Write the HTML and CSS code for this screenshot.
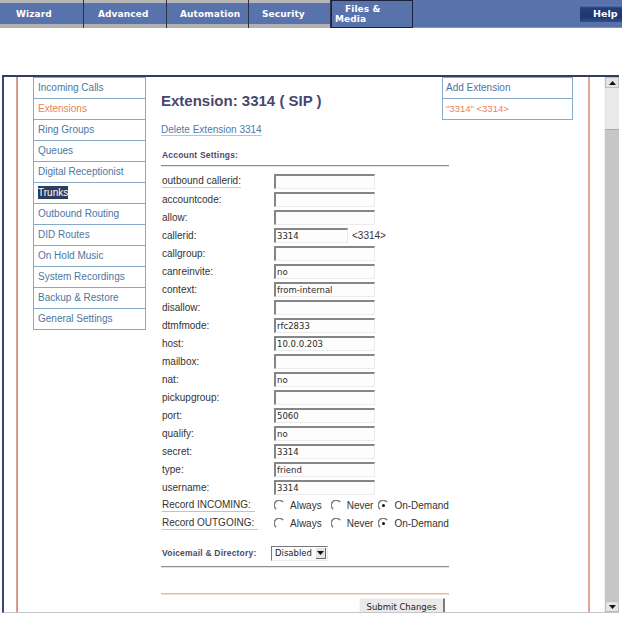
FILE: index.html
```html
<!DOCTYPE html>
<html>
<head>
<meta charset="utf-8">
<title>Extension 3314</title>
<link rel="stylesheet" href="styles.css">
</head>
<body>
<div class="topnav">
  <div class="tab w1">Wizard</div>
  <div class="tab w2">Advanced</div>
  <div class="tab w3">Automation</div>
  <div class="tab w3">Security</div>
  <div class="tab active"><span class="l1">Files &amp;</span><span class="l2">Media</span></div>
  <div class="navfill"><div class="help">Help</div></div>
</div>

<div class="frame">
  <div class="view">
    <ul class="menu">
      <li>Incoming Calls</li>
      <li class="cur">Extensions</li>
      <li>Ring Groups</li>
      <li>Queues</li>
      <li>Digital Receptionist</li>
      <li><span class="sel">Trunks</span></li>
      <li>Outbound Routing</li>
      <li>DID Routes</li>
      <li>On Hold Music</li>
      <li>System Recordings</li>
      <li>Backup &amp; Restore</li>
      <li>General Settings</li>
    </ul>

    <div class="main">
      <h1 class="title">Extension: 3314 ( SIP )</h1>
      <div class="del"><span class="dlink">Delete Extension 3314</span></div>
      <div class="section">Account Settings:</div>

      <div class="rows">
        <div class="row"><span class="lbl"><span class="ul">outbound callerid:</span></span><span class="inp"></span></div>
        <div class="row"><span class="lbl">accountcode:</span><span class="inp"></span></div>
        <div class="row"><span class="lbl">allow:</span><span class="inp"></span></div>
        <div class="row"><span class="lbl">callerid:</span><span class="inp short">3314</span><span class="after">&lt;3314&gt;</span></div>
        <div class="row"><span class="lbl">callgroup:</span><span class="inp"></span></div>
        <div class="row"><span class="lbl">canreinvite:</span><span class="inp">no</span></div>
        <div class="row"><span class="lbl">context:</span><span class="inp">from-internal</span></div>
        <div class="row"><span class="lbl">disallow:</span><span class="inp"></span></div>
        <div class="row"><span class="lbl">dtmfmode:</span><span class="inp">rfc2833</span></div>
        <div class="row"><span class="lbl">host:</span><span class="inp">10.0.0.203</span></div>
        <div class="row"><span class="lbl">mailbox:</span><span class="inp"></span></div>
        <div class="row"><span class="lbl">nat:</span><span class="inp">no</span></div>
        <div class="row"><span class="lbl">pickupgroup:</span><span class="inp"></span></div>
        <div class="row"><span class="lbl">port:</span><span class="inp">5060</span></div>
        <div class="row"><span class="lbl">qualify:</span><span class="inp">no</span></div>
        <div class="row"><span class="lbl">secret:</span><span class="inp">3314</span></div>
        <div class="row"><span class="lbl">type:</span><span class="inp">friend</span></div>
        <div class="row"><span class="lbl">username:</span><span class="inp">3314</span></div>
        <div class="row">
          <span class="lbl"><span class="ul rec">Record INCOMING:</span></span>
          <span class="opt"><svg class="radio" viewBox="0 0 11 11"><path d="M9.2 2.2 A5 5 0 1 0 2.2 9.2" fill="none" stroke="#7d7d7d" stroke-width="1.4"/></svg>Always</span>
          <span class="opt o2"><svg class="radio" viewBox="0 0 11 11"><path d="M9.2 2.2 A5 5 0 1 0 2.2 9.2" fill="none" stroke="#7d7d7d" stroke-width="1.4"/></svg>Never</span>
          <span class="opt o3"><svg class="radio" viewBox="0 0 11 11"><path d="M9.2 2.2 A5 5 0 1 0 2.2 9.2" fill="none" stroke="#7d7d7d" stroke-width="1.4"/><circle cx="5.5" cy="5.5" r="1.5" fill="#111"/></svg>On-Demand</span>
        </div>
        <div class="row">
          <span class="lbl"><span class="ul rec">Record OUTGOING:</span></span>
          <span class="opt"><svg class="radio" viewBox="0 0 11 11"><path d="M9.2 2.2 A5 5 0 1 0 2.2 9.2" fill="none" stroke="#7d7d7d" stroke-width="1.4"/></svg>Always</span>
          <span class="opt o2"><svg class="radio" viewBox="0 0 11 11"><path d="M9.2 2.2 A5 5 0 1 0 2.2 9.2" fill="none" stroke="#7d7d7d" stroke-width="1.4"/></svg>Never</span>
          <span class="opt o3"><svg class="radio" viewBox="0 0 11 11"><path d="M9.2 2.2 A5 5 0 1 0 2.2 9.2" fill="none" stroke="#7d7d7d" stroke-width="1.4"/><circle cx="5.5" cy="5.5" r="1.5" fill="#111"/></svg>On-Demand</span>
        </div>
      </div>

      <div class="vm">
        <span class="vmlbl">Voicemail &amp; Directory:</span>
        <span class="select"><span class="sval">Disabled</span><span class="sbtn"><svg viewBox="0 0 7 4" width="7" height="4"><path d="M0 0 H7 L3.5 4 Z" fill="#111"/></svg></span></span>
      </div>

      <div class="orange"></div>
      <div class="actions"><span class="btn">Submit Changes</span></div>
    </div>

    <ul class="menu side">
      <li>Add Extension</li>
      <li class="cur">"3314" &lt;3314&gt;</li>
    </ul>
  </div>
  <div class="scrollbar">
    <div class="arrow up"><svg viewBox="0 0 7 4" width="7" height="4"><path d="M0 4 H7 L3.5 0 Z" fill="#111"/></svg></div>
    <div class="thumb"></div>
    <div class="track"></div>
    <div class="arrow down"><svg viewBox="0 0 7 4" width="7" height="4"><path d="M0 0 H7 L3.5 4 Z" fill="#111"/></svg></div>
  </div>
</div>
</body>
</html>
```

FILE: styles.css
```css
html, body {
  margin: 0;
  padding: 0;
  background: #ffffff;
}
body {
  font-family: "Liberation Sans", Arial, sans-serif;
  font-size: 10px;
  color: #333;
  width: 622px;
  height: 622px;
  overflow: hidden;
}

/* ---------- top navigation ---------- */
.topnav {
  display: flex;
  height: 28px;
  background: #5873ab;
}
.tab {
  box-sizing: border-box;
  width: 83px;
  height: 28px;
  padding-left: 14px;
  display: flex;
  align-items: center;
  background: linear-gradient(to bottom, #b7b7b7 0 3px, #5873ab 3px 24px, #b1b1b1 24px 28px);
  border-right: 1px solid #2b3046;
  color: #fff;
  font-family: "DejaVu Sans", sans-serif;
  font-weight: bold;
  font-size: 9px;
  letter-spacing: 0.1px;
}
.tab.w1 { width: 84px; padding-left: 16px; }
.tab.w3 { width: 82px; padding-left: 13px; }
.tab.active {
  width: 82px;
  background: #5873ab;
  border: 1px solid #1b2238;
  padding-left: 3px;
  flex-direction: column;
  align-items: flex-start;
  justify-content: center;
  line-height: 10px;
}
.tab.active .l1 { padding-left: 10px; }
.navfill {
  flex: 1;
  display: flex;
  justify-content: flex-end;
  align-items: flex-start;
  border-bottom: 1px solid #8193bd;
}
.help {
  margin-top: 5px;
  width: 42px;
  height: 17px;
  box-sizing: border-box;
  padding-left: 13px;
  line-height: 17px;
  color: #fff;
  font-family: "DejaVu Sans", sans-serif;
  font-weight: bold;
  font-size: 9.5px;
  background: linear-gradient(to bottom, #6d83b4 0, #243f7a 3px, #1d3670 12px, #30508c 17px);
}

/* ---------- frame ---------- */
.frame {
  margin: 47px 0 0 2px;
  width: 615px;
  height: 535px;
  border-top: 2px solid #323d66;
  border-left: 2px solid #3a4570;
  border-bottom: 1px solid #c3c6cf;
  display: flex;
}
.view {
  flex: 1;
  min-width: 0;
  overflow: hidden;
  display: flex;
  align-items: flex-start;
  padding-left: 29px;
  background-color: #fff;
  background-image:
    linear-gradient(to right, transparent 12px, #e7b2a2 12px, #d68e79 13px, #d68e79 14px, transparent 14px),
    linear-gradient(to left, transparent 14px, #e0a696 14px, #e0a696 16px, transparent 16px);
  background-repeat: no-repeat;
}

/* ---------- menus ---------- */
.menu {
  list-style: none;
  margin: 0;
  padding: 0;
  width: 113px;
  box-sizing: border-box;
  border: 1px solid #87aacb;
  border-bottom: none;
  flex-shrink: 0;
  background: #fff;
}
.menu li {
  height: 20px;
  line-height: 20px;
  border-bottom: 1px solid #87aacb;
  padding-left: 4px;
  color: #4b77a3;
  font-size: 10px;
  white-space: nowrap;
}
.menu li.cur { color: #e8835b; }
.menu .sel {
  background: #2f3d5d;
  color: #fff;
  padding: 1px 0;
}
.menu.side {
  width: 131px;
  margin-left: -7px;
}
.menu.side li { padding-left: 3px; }
.menu.side li.cur { font-size: 9.5px; }

/* ---------- main column ---------- */
.main {
  width: 288px;
  padding-left: 15px;
  flex-shrink: 0;
}
.title {
  margin: 15px 0 0;
  font-size: 15px;
  line-height: 18px;
  font-weight: bold;
  color: #48476f;
}
.del {
  margin-top: 13px;
  line-height: 14px;
}
.dlink {
  color: #4d7bab;
  font-size: 10px;
  text-decoration: underline;
  text-decoration-color: #a9c7e3;
  text-underline-offset: 2px;
}
.section {
  margin-top: 12px;
  line-height: 12px;
  padding: 0 0 4px 1px;
  border-bottom: 1px solid #8e8e8e;
  box-shadow: 0 1px 0 #e4e4e4;
  font-size: 8.5px;
  font-weight: bold;
  color: #4b4a6c;
  letter-spacing: 0.2px;
}
.rows { margin-top: 6px; }
.row {
  display: flex;
  align-items: center;
  height: 18px;
  white-space: nowrap;
}
.lbl {
  width: 113px;
  flex-shrink: 0;
  padding-left: 1px;
  box-sizing: border-box;
  font-size: 10px;
  color: #333;
}
.ul {
  display: inline-block;
  line-height: 12px;
  border-bottom: 1px solid #f1c57c;
}
.ul.rec { font-size: 10px; padding-right: 4px; border-bottom-color: #f0bb74; }
.inp {
  box-sizing: border-box;
  flex-shrink: 0;
  width: 101px;
  height: 15px;
  border-top: 2px solid #858585;
  border-left: 2px solid #858585;
  border-right: 1px solid #ececec;
  border-bottom: 1px solid #ececec;
  background: #fdfdfd;
  font-family: "DejaVu Sans", sans-serif;
  font-size: 8.5px;
  line-height: 12px;
  padding-left: 1px;
  color: #2a2a2a;
}
.inp.short { width: 74px; }
.after { margin-left: 4px; font-size: 10px; color: #333; }
.opt {
  display: inline-flex;
  align-items: center;
  flex-shrink: 0;
  white-space: nowrap;
  font-size: 10px;
  color: #333;
  margin-right: 9px;
}
.opt.o2 { margin-right: 5px; }
.opt.o3 { margin-right: 0; }
.radio {
  width: 11px;
  height: 11px;
  margin-right: 5px;
  flex-shrink: 0;
}

/* voicemail */
.vm {
  margin-top: 12px;
  height: 18px;
  padding-bottom: 4px;
  display: flex;
  align-items: center;
  border-bottom: 1px solid #8e8e8e;
  box-shadow: 0 1px 0 #e4e4e4;
}
.vmlbl {
  width: 109px;
  padding-left: 1px;
  font-size: 8.5px;
  font-weight: bold;
  color: #4b4a6c;
  letter-spacing: 0.2px;
}
.select {
  box-sizing: border-box;
  width: 57px;
  height: 15px;
  display: flex;
  align-items: center;
  justify-content: space-between;
  border-top: 1px solid #777;
  border-left: 1px solid #777;
  border-right: 1px solid #e8e8e8;
  border-bottom: 1px solid #e8e8e8;
  background: #fdfdfd;
}
.sval {
  font-family: "DejaVu Sans", sans-serif;
  font-size: 8.5px;
  color: #222;
  padding-left: 3px;
}
.sbtn {
  box-sizing: border-box;
  width: 10px;
  height: 11px;
  margin-right: 1px;
  background: #e6e6e6;
  border-right: 1px solid #666;
  border-bottom: 1px solid #666;
  display: flex;
  align-items: center;
  justify-content: center;
}
.orange {
  margin-top: 26px;
  height: 1px;
  background: #efb49d;
  box-shadow: 0 1px 0 #f8dcd0;
}
.actions {
  margin-top: 4px;
  display: flex;
  justify-content: flex-end;
  padding-right: 4px;
}
.btn {
  box-sizing: border-box;
  width: 86px;
  height: 18px;
  line-height: 16px;
  text-align: center;
  font-family: "DejaVu Sans", sans-serif;
  font-size: 8.5px;
  color: #222;
  background: #eaeaea;
  border-top: 1px solid #f6f6f6;
  border-left: 1px solid #f6f6f6;
  border-right: 2px solid #7a7a7a;
  border-bottom: 2px solid #7a7a7a;
}

/* ---------- scrollbar ---------- */
.scrollbar {
  width: 14px;
  flex-shrink: 0;
  display: flex;
  flex-direction: column;
  background: #c6c6c6;
  border-left: 1px solid #f3f3f3;
}
.arrow {
  height: 11px;
  box-sizing: border-box;
  background: #e4e4e4;
  border: 1px solid #bdbdbd;
  display: flex;
  align-items: center;
  justify-content: center;
}
.thumb {
  height: 41px;
  background: #e9e9e9;
  border-bottom: 1px solid #a9a9a9;
}
.track { flex: 1; background: #c6c6c6; }
```
